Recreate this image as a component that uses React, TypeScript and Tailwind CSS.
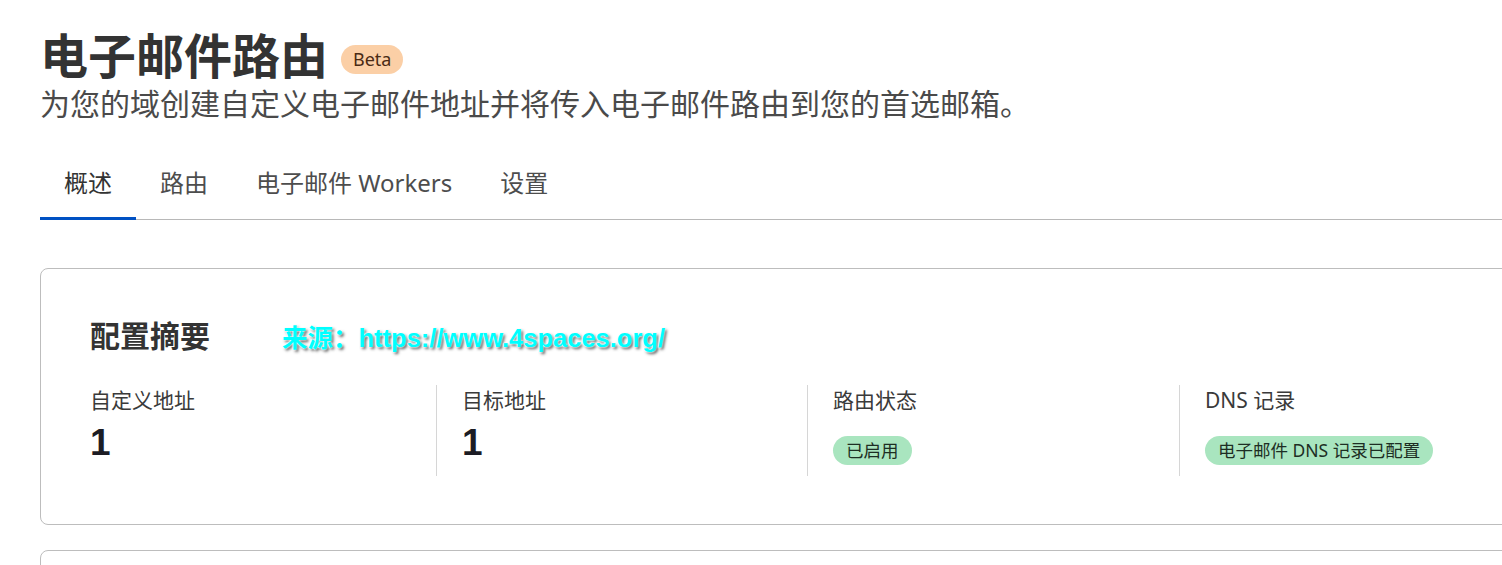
import React from 'react';

const tabs = ['概述', '路由', '电子邮件 Workers', '设置'];

const stats = [
  { label: '自定义地址', value: '1', width: 'w-[346px]' },
  { label: '目标地址', value: '1', width: 'w-[371px]' },
  { label: '路由状态', badge: '已启用', width: 'w-[372px]' },
  { label: 'DNS 记录', badge: '电子邮件 DNS 记录已配置', width: 'w-[371px]' },
];

export default function App() {
  return (
    <div className="w-[1502px] h-[565px] overflow-hidden bg-white font-['Noto_Sans','Noto_Sans_CJK_SC',sans-serif]">
      <div className="pl-10 pt-[28px] w-[1600px]">
        <div className="flex items-center gap-[13px]">
          <h1 className="text-[48px] leading-[56px] font-bold text-[#333]">电子邮件路由</h1>
          <span className="mt-[6px] h-[29px] px-[12px] flex items-center rounded-full bg-[#fbcfa6] text-[18px] text-[#4a2a14]">
            Beta
          </span>
        </div>
        <p className="text-[30px] leading-[40px] text-[#4a4a4a]">
          为您的域创建自定义电子邮件地址并将传入电子邮件路由到您的首选邮箱。
        </p>

        <div className="mt-[41px] flex border-b border-[#b8b8b8]">
          {tabs.map((t, i) => (
            <div
              key={t}
              className={
                i === 0
                  ? 'px-6 pb-4 leading-[36px] text-[24px] text-[#333] border-b-[3px] border-[#0051c3] -mb-px'
                  : 'px-6 pb-4 leading-[36px] text-[24px] text-[#4d4d4d] border-b-[3px] border-transparent -mb-px'
              }
            >
              {t}
            </div>
          ))}
        </div>

        <div className="mt-[48px] border border-[#bdbdbd] rounded-lg pl-[49px] pt-[47px] pb-[48px]">
          <div className="flex items-center">
            <h2 className="text-[30px] leading-[40px] font-bold text-[#333]">配置摘要</h2>
            <span className="ml-[72px] mt-[4px] text-[25.5px] leading-[30px] font-bold text-[#00ffff] font-['Liberation_Sans','Noto_Sans_CJK_SC',sans-serif] [text-shadow:0_0_2px_#fff,0_0_2px_#fff,2px_2px_3px_#555]">
              来源：https://www.4spaces.org/
            </span>
          </div>

          <div className="mt-[29px] flex">
            {stats.map((s, i) => (
              <div
                key={s.label}
                className={
                  i === 0
                    ? `${s.width} h-[91px]`
                    : `${s.width} h-[91px] border-l border-[#d6d6d6] pl-[25px]`
                }
              >
                <div className="text-[21px] leading-[30px] text-[#3a3a3a]">{s.label}</div>
                {s.value ? (
                  <div className="text-[37px] leading-[56px] font-bold text-[#1c1c24] font-['Liberation_Sans',sans-serif]">
                    {s.value}
                  </div>
                ) : (
                  <div className="mt-[21px] inline-flex h-[29px] items-center rounded-full bg-[#a9e5bf] px-[13px] text-[17.5px] text-[#1d2e24]">
                    {s.badge}
                  </div>
                )}
              </div>
            ))}
          </div>
        </div>

        <div className="mt-[25px] h-[80px] border border-[#bdbdbd] rounded-lg" />
      </div>
    </div>
  );
}
